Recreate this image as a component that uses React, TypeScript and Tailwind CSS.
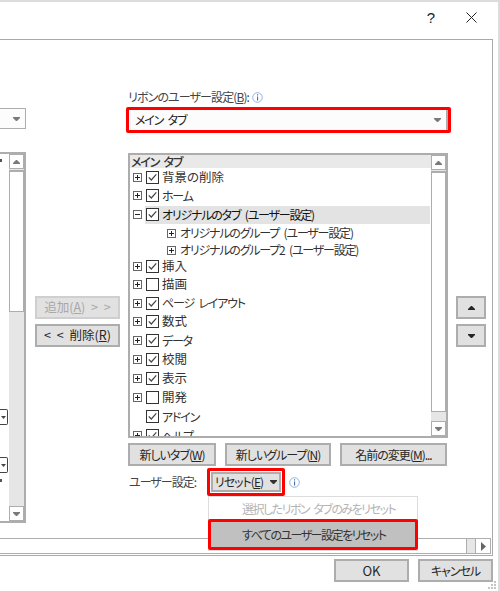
import type { ReactNode } from 'react';

const btn = 'flex items-center justify-center whitespace-nowrap border-2 border-[#adadad] bg-[#e1e1e1] text-[#262626]';

function Arrow({ down = false, color = '#7a7a7a' }: { down?: boolean; color?: string }) {
  return (
    <svg width="7" height="4" viewBox="0 0 7 4" className="shrink-0">
      <path d={down ? 'M0 0H7V1L4 4H3L0 1Z' : 'M3 0H4L7 3V4H0V3Z'} fill={color} />
    </svg>
  );
}

function Info() {
  return (
    <svg width="11" height="11" viewBox="0 0 11 11" className="shrink-0">
      <circle cx="5.500" cy="5.500" r="4.800" fill="none" stroke="#8fb4e3" strokeWidth="1" />
      <path d="M5 2.300h1.100v1.200H5zM5 4.500h1.100v4H5z" fill="#4a6fa0" />
    </svg>
  );
}

function Expander({ open = false }: { open?: boolean }) {
  return (
    <svg width="9" height="9" viewBox="0 0 9 9" className="shrink-0">
      <rect x=".5" y=".5" width="8" height="8" fill="#fff" stroke="#666" />
      <path d={open ? 'M2 4h5v1H2z' : 'M2 4h5v1H2zM4 2h1v5H4z'} fill="#222" />
    </svg>
  );
}

function Check({ on = true }: { on?: boolean }) {
  return (
    <svg width="13" height="13" viewBox="0 0 13 13" className="shrink-0">
      <rect x=".5" y=".5" width="12" height="12" fill="#fff" stroke="#333" />
      {on && <path d="M2.800 6.300 5.300 9l5-5.600" fill="none" stroke="#444" strokeWidth="1.200" />}
    </svg>
  );
}

function VScrollbar({ thumb, className }: { thumb: string; className: string }) {
  return (
    <div className={`flex flex-col bg-[#e6e6e6] ${className}`}>
      <div className="flex h-[15px] shrink-0 items-center justify-center border border-[#adadad] bg-white">
        <Arrow />
      </div>
      <div className={`${thumb} mt-[1px] shrink-0 border border-t-2 border-[#adadad] bg-white`} />
      <div className="flex-1" />
      <div className="flex h-[15px] shrink-0 items-center justify-center border border-[#adadad] bg-white">
        <Arrow down />
      </div>
    </div>
  );
}

function Row({ h, label, on = true, box = true, open = false, selected = false, kanji = false }: {
  h: string;
  label: string;
  on?: boolean;
  box?: boolean;
  open?: boolean;
  selected?: boolean;
  kanji?: boolean;
}) {
  return (
    <div className={`flex shrink-0 items-center pl-[3px] ${h}`}>
      <div className="w-[9px] shrink-0">{box && <Expander open={open} />}</div>
      <div className={`ml-[3px] flex h-[18px] w-[285px] items-center pl-[1px] ${selected ? 'bg-[#e3e3e3] text-[#111]' : ''}`}>
        <Check on={on} />
        <span className={`ml-[3px] whitespace-nowrap ${kanji ? 'text-[12.5px] tracking-normal' : ''}`}>{label}</span>
      </div>
    </div>
  );
}

function GroupRow({ h, label }: { h: string; label: ReactNode }) {
  return (
    <div className={`flex shrink-0 items-center pl-[37px] ${h}`}>
      <Expander />
      <span className="ml-[4px] whitespace-nowrap">{label}</span>
    </div>
  );
}

function ClippedCombo({ className }: { className: string }) {
  return (
    <div className={`flex h-[16px] w-[8px] items-center justify-center rounded-r-[2px] border border-l-0 border-[#444] ${className}`}>
      <svg width="5" height="3" viewBox="0 0 5 3"><path d="M0 0h5L2.500 3z" fill="#444" /></svg>
    </div>
  );
}

export default function App() {
  return (
    <div className="relative flex h-[591px] w-[500px] flex-col overflow-hidden border-t-2 border-r-2 border-[#dcdcdc] bg-white font-['Noto_Sans_CJK_JP','Liberation_Sans',sans-serif] text-[12px] leading-none tracking-[-1.2px] text-[#333] [font-feature-settings:'palt'] [word-spacing:3px]">
      {/* title bar */}
      <div className="flex h-[37px] shrink-0 items-center justify-end pr-[21px] pb-[7px]">
        <span className="mr-[32px] font-['Liberation_Sans',sans-serif] text-[15px] text-[#222]">?</span>
        <svg width="11" height="11" viewBox="0 0 11 11">
          <path d="M.5.5l10 10M10.500.5l-10 10" stroke="#222" strokeWidth="1" fill="none" />
        </svg>
      </div>

      {/* main group box */}
      <div className="flex h-[517px] w-[493px] shrink-0 flex-col border border-l-0 border-[#a9a9a9]">
        <div className="flex h-[498px] shrink-0">
          {/* left column, cut off by the crop */}
          <div className="flex w-[26px] shrink-0 flex-col">
            <div className="mt-[68px] flex h-[21px] shrink-0 items-center justify-end border border-l-0 border-[#adadad] bg-[#fcfcfc] pr-[5px]">
              <Arrow down />
            </div>
            <div className="mt-[23px] flex h-[371px] shrink-0 border-t-2 border-r-2 border-b-2 border-[#adadad]">
              <div className="w-[9px] shrink-0">
                <div className="mt-[5px] h-[3px] w-[2px] bg-[#555]" />
                <ClippedCombo className="mt-[247px]" />
                <ClippedCombo className="mt-[32px]" />
                <div className="mt-[6px] h-[3px] w-[2px] bg-[#555]" />
              </div>
              <VScrollbar thumb="h-[142px]" className="w-[15px] shrink-0" />
            </div>
          </div>

          {/* add / remove */}
          <div className="ml-[9px] flex w-[85px] shrink-0 flex-col gap-[5px] pt-[256px] text-[12.5px] tracking-normal">
            <div className="flex h-[23px] items-center justify-center border-2 border-[#cfcfcf] bg-[#e1e1e1] text-[#a8a8a8]">
              <span>追加(<u>A</u>) &gt; &gt;</span>
            </div>
            <div className={`${btn} h-[23px]`}>
              <span>&lt; &lt; 削除(<u>R</u>)</span>
            </div>
          </div>

          {/* ribbon column */}
          <div className="ml-[6px] flex w-[325px] shrink-0 flex-col">
            <div className="flex h-[67px] shrink-0 items-end pb-[4px] pl-[2px] tracking-[-0.9px] text-[#444]">
              <span>リボンのユーザー設定(<u>B</u>):</span>
              <span className="ml-[3px]"><Info /></span>
            </div>
            <div className="h-[26px] shrink-0 rounded-[2px] border-[3px] border-[#ff0000]">
              <div className="flex h-full items-center justify-between border-r-2 border-[#adadad] bg-[#fcfcfc] pr-[5px] pl-[6px]">
                <span className="text-[#222]">メイン タブ</span>
                <Arrow down />
              </div>
            </div>

            <div className="mt-[20px] ml-[2px] flex h-[285px] w-[320px] shrink-0 overflow-hidden border-2 border-[#adadad]">
              <div className="flex w-[302px] flex-col overflow-hidden">
                <div className="flex h-[13px] shrink-0 items-center bg-[#e9e9e9] pl-[1px] text-[#333]">
                  <span className="font-medium">メイン タブ</span>
                </div>
                <Row h="h-[18px]" label="背景の削除" kanji />
                <Row h="h-[19px]" label="ホーム" />
                <Row h="h-[19px]" label="オリジナルのタブ (ユーザー設定)" open selected />
                <GroupRow h="h-[18px]" label="オリジナルのグループ (ユーザー設定)" />
                <GroupRow h="h-[16px]" label="オリジナルのグループ2 (ユーザー設定)" />
                <Row h="h-[17px]" label="挿入" kanji />
                <Row h="h-[19px]" label="描画" on={false} kanji />
                <Row h="h-[18px]" label="ページ レイアウト" />
                <Row h="h-[19px]" label="数式" kanji />
                <Row h="h-[19px]" label="データ" />
                <Row h="h-[19px]" label="校閲" kanji />
                <Row h="h-[19px]" label="表示" kanji />
                <Row h="h-[19px]" label="開発" on={false} kanji />
                <Row h="h-[19px]" label="アドイン" box={false} />
                <Row h="h-[19px]" label="ヘルプ" />
              </div>
              <VScrollbar thumb="h-[241px]" className="w-[15px] shrink-0" />
            </div>

            <div className="mt-[5px] ml-[2px] flex w-[320px] shrink-0 gap-[9px] tracking-[-1px]">
              <div className={`${btn} h-[23px] w-[88px]`}><span>新しいタブ(<u>W</u>)</span></div>
              <div className={`${btn} h-[23px] w-[106px]`}><span>新しいグループ(<u>N</u>)</span></div>
              <div className={`${btn} h-[23px] w-[107px]`}><span>名前の変更(<u>M</u>)...</span></div>
            </div>

            <div className="mt-[2px] flex items-center tracking-[-1px]">
              <span className="ml-[3px] w-[78px] shrink-0 whitespace-nowrap text-[#444]">ユーザー設定:</span>
              <div className="h-[28px] w-[78px] shrink-0 rounded-[2px] border-[3px] border-[#ff0000] p-[1px]">
                <div className={`${btn} h-full gap-[7px]`}>
                  <span>リセット(<u>E</u>)</span>
                  <Arrow down color="#333" />
                </div>
              </div>
              <span className="ml-[4px]"><Info /></span>
            </div>
          </div>

          {/* move up / down */}
          <div className="ml-[5px] flex w-[30px] shrink-0 flex-col gap-[5px] pt-[256px]">
            <div className={`${btn} h-[23px]`}><Arrow color="#262626" /></div>
            <div className={`${btn} h-[23px]`}><Arrow down color="#262626" /></div>
          </div>
        </div>

        {/* horizontal scrollbar */}
        <div className="flex h-[16px] w-[491px] shrink-0 border-t border-b border-[#adadad]">
          <div className="w-[467px] shrink-0 border-r border-[#adadad] bg-white" />
          <div className="w-[8px] shrink-0 bg-[#e6e6e6]" />
          <div className="flex flex-1 items-center justify-center border-x border-[#adadad] bg-white">
            <svg width="5" height="9" viewBox="0 0 5 9"><path d="M0 0l5 4.500L0 9z" fill="#666" /></svg>
          </div>
        </div>
      </div>

      {/* footer */}
      <div className="mt-[3px] flex w-[493px] shrink-0 justify-end gap-[9px]">
        <div className={`${btn} h-[23px] w-[75px]`}><span className="text-[13px] tracking-normal">OK</span></div>
        <div className={`${btn} h-[23px] w-[75px]`}><span className="tracking-[-1px]">キャンセル</span></div>
      </div>

      {/* resize grip */}
      <svg width="10" height="10" viewBox="0 0 10 10" className="absolute right-[1px] bottom-[1px]">
        <path d="M7 1h2v2H7zM4 4h2v2H4zM7 4h2v2H7zM1 7h2v2H1zM4 7h2v2H4zM7 7h2v2H7z" fill="#c4c4c4" />
      </svg>

      {/* reset dropdown menu */}
      <div className="absolute top-[494px] left-[208px] h-[55px] w-[210px] border border-[#dcdcdc] bg-white tracking-[-1.5px]">
        <div className="flex h-[22px] items-center pt-[2px] pl-[33px] text-[#b4b4b4]">選択したリボン タブのみをリセット</div>
        <div className="-ml-[1px] flex h-[31px] w-[210px] items-center rounded-[2px] border-[3px] border-[#ff0000] bg-[#c0c0c0] pl-[31px] text-[#333]">
          すべてのユーザー設定をリセット
        </div>
      </div>
    </div>
  );
}
